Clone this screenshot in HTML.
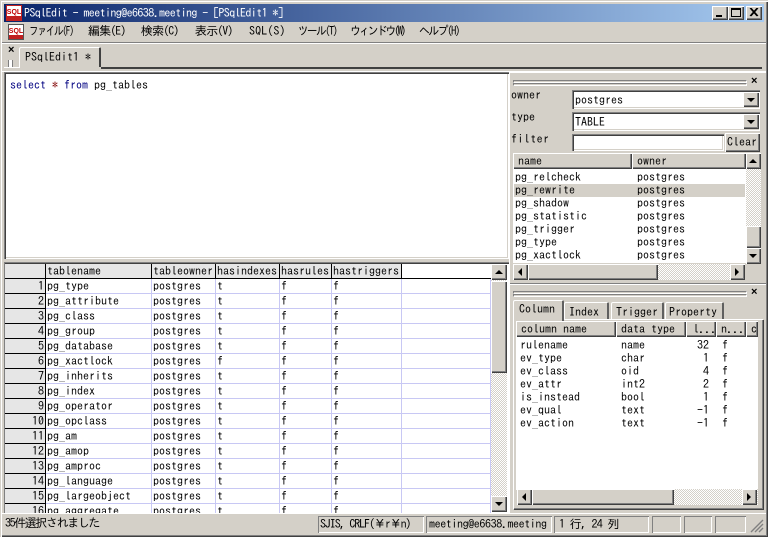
<!DOCTYPE html>
<html><head><meta charset="utf-8"><style>
html,body{margin:0;padding:0;background:#d4d0c8}
#w{position:relative;width:768px;height:537px;overflow:hidden;background:#d4d0c8;font:12px/13px "IPAGothic","Noto Sans CJK JP",monospace;color:#000}
#w div{position:absolute;box-sizing:border-box;white-space:pre}
.r{background:#d4d0c8;box-shadow:inset 1px 1px 0 #fff,inset -1px -1px 0 #404040,inset -2px -2px 0 #808080}
.s{background:#fff;box-shadow:inset 1px 1px 0 #808080,inset 2px 2px 0 #404040,inset -1px -1px 0 #fff,inset -2px -2px 0 #d4d0c8}
.d{background:conic-gradient(#fff 25%,#d4d0c8 0 50%,#fff 0 75%,#d4d0c8 0) 0 0/2px 2px}
.st{box-shadow:inset 1px 1px 0 #808080,inset -1px -1px 0 #fff;padding:2px 0 0 3px}
.g{height:3px;border:1px solid #808080;border-right-color:#fff;border-bottom-color:#fff}
.au,.ad,.al,.ar{width:0;height:0;border:solid transparent}
.au{border-width:0 4px 4px;border-bottom-color:#000}
.ad{border-width:4px 4px 0;border-top-color:#000}
.al{border-width:4px 4px 4px 0;border-right-color:#000}
.ar{border-width:4px 0 4px 4px;border-left-color:#000}
.m{letter-spacing:-.4px;top:25px;transform-origin:0 0}
.tb{background:#d4d0c8;border-top:1px solid #fff;border-left:1px solid #fff;border-right:2px solid #404040;padding:3px 0 0 5px;border-radius:2px 2px 0 0}
table{border-collapse:separate;border-spacing:0;table-layout:fixed;position:absolute;left:5px;top:264px;width:486px}
td{height:15px;box-sizing:border-box;padding:0 0 0 1px;border-right:1px solid #c8c8f4;border-bottom:1px solid #c8c8f4;line-height:14px;white-space:pre;overflow:hidden}
td:first-child{background:#e6e6e6;text-align:right;padding:0 1px 0 0;border-right:1px solid #000;border-bottom:1px solid #000}
tr:first-child td{background:#e6e6e6;border-bottom:1px solid #000;border-right:1px solid #000;padding-left:1px}
tr:first-child td:last-child{background:#fff;border-right:0}
</style></head><body><div id="w">

<div style="left:0;top:0;width:768px;height:537px;box-shadow:inset 1px 1px 0 #d4d0c8,inset 2px 2px 0 #fff,inset -1px -1px 0 #404040,inset -2px -2px 0 #808080"></div>

<div style="left:4px;top:4px;width:760px;height:18px;background:linear-gradient(90deg,#0a246a,#a6caf0);color:#fff;padding:3px 0 0 20px;letter-spacing:-.6px">PSqlEdit - meeting@e6638.meeting - [PSqlEdit1 *]</div>
<svg style="position:absolute;left:6px;top:5px" width="16" height="16"><rect x=".5" y=".5" width="15" height="15" fill="#fff" stroke="#c02020"/><rect x="1" y="11" width="14" height="4" fill="#c02020"/><text x="8" y="9" font-size="7" font-weight="bold" text-anchor="middle" fill="#c00000" font-family="Liberation Sans">SQL</text></svg>
<div class="r" style="left:712px;top:6px;width:16px;height:14px"></div>
<div style="left:716px;top:15px;width:6px;height:2px;background:#000"></div>
<div class="r" style="left:728px;top:6px;width:16px;height:14px"></div>
<div style="left:731px;top:8px;width:10px;height:9px;border:1px solid #000;border-top-width:2px"></div>
<div class="r" style="left:746px;top:6px;width:16px;height:14px"></div>
<svg style="position:absolute;left:749px;top:8px" width="10" height="9"><path d="M1 0L8 8M2 0L9 8M8 0L1 8M9 0L2 8" stroke="#000" stroke-width="1" fill="none"/></svg>

<svg style="position:absolute;left:8px;top:24px" width="16" height="16"><rect x=".5" y=".5" width="15" height="15" fill="#fff" stroke="#555"/><rect x="1" y="11" width="14" height="4" fill="#c02020"/><text x="8" y="9" font-size="7" font-weight="bold" text-anchor="middle" fill="#c00000" font-family="Liberation Sans">SQL</text></svg>
<div class="m" style="left:29px;letter-spacing:-1.6px;transform:scaleX(.8)">ファイル(F)</div>
<div class="m" style="left:88px;letter-spacing:-.9px">編集(E)</div>
<div class="m" style="left:141px;letter-spacing:-.9px">検索(C)</div>
<div class="m" style="left:195px;letter-spacing:-.9px">表示(V)</div>
<div class="m" style="left:249px;letter-spacing:.1px">SQL(S)</div>
<div class="m" style="left:298px;letter-spacing:-1.6px;transform:scaleX(.87)">ツール(T)</div>
<div class="m" style="left:350px;letter-spacing:-2.4px;transform:scaleX(.92)">ウィンドウ(W)</div>
<div class="m" style="left:419px;letter-spacing:-1.6px;transform:scaleX(.9)">ヘルプ(H)</div>

<div style="left:2px;top:42px;width:764px;height:2px;background:linear-gradient(#808080 50%,#fff 50%)"></div>
<div style="left:8px;top:44px;font:bold 11px/12px 'Liberation Sans',sans-serif">×</div>
<div style="left:8px;top:60px;width:5px;height:7px;border-left:1px solid #808080;border-right:1px solid #808080;background:#fff"></div>
<div class="tb" style="left:19px;top:47px;width:82px;height:20px">PSqlEdit1 *</div>
<div style="left:101px;top:67px;width:660px;height:2px;background:#404040"></div>
<div style="left:4px;top:67px;width:16px;height:1px;background:#fff"></div>
<div style="left:761px;top:67px;width:1px;height:2px;background:#404040"></div>
<div style="left:2px;top:71px;width:764px;height:1px;background:#fff"></div>

<div class="s" style="left:4px;top:72px;width:505px;height:187px"></div>
<div style="left:10px;top:79px;color:#000080">select <span style="color:#800000">*</span> from <span style="color:#000">pg_tables</span></div>

<div class="s" style="left:4px;top:262px;width:505px;height:252px;box-shadow:inset 1px 1px 0 #808080,inset 2px 2px 0 #404040"></div>
<div style="left:5px;top:264px;width:486px;height:250px;overflow:hidden;background:#fff"></div>
<div style="left:0;top:0;width:768px;height:514px;overflow:hidden;pointer-events:none">
<table>
<colgroup><col style="width:41px"><col style="width:106px"><col style="width:64px"><col style="width:64px"><col style="width:52px"><col style="width:70px"><col style="width:89px"></colgroup>
<tr><td></td><td>tablename</td><td>tableowner</td><td>hasindexes</td><td>hasrules</td><td>hastriggers</td><td></td></tr>
<tr><td>1</td><td>pg_type</td><td>postgres</td><td>t</td><td>f</td><td>f</td><td></td></tr>
<tr><td>2</td><td>pg_attribute</td><td>postgres</td><td>t</td><td>f</td><td>f</td><td></td></tr>
<tr><td>3</td><td>pg_class</td><td>postgres</td><td>t</td><td>f</td><td>f</td><td></td></tr>
<tr><td>4</td><td>pg_group</td><td>postgres</td><td>t</td><td>f</td><td>f</td><td></td></tr>
<tr><td>5</td><td>pg_database</td><td>postgres</td><td>t</td><td>f</td><td>f</td><td></td></tr>
<tr><td>6</td><td>pg_xactlock</td><td>postgres</td><td>f</td><td>f</td><td>f</td><td></td></tr>
<tr><td>7</td><td>pg_inherits</td><td>postgres</td><td>t</td><td>f</td><td>f</td><td></td></tr>
<tr><td>8</td><td>pg_index</td><td>postgres</td><td>t</td><td>f</td><td>f</td><td></td></tr>
<tr><td>9</td><td>pg_operator</td><td>postgres</td><td>t</td><td>f</td><td>f</td><td></td></tr>
<tr><td>10</td><td>pg_opclass</td><td>postgres</td><td>t</td><td>f</td><td>f</td><td></td></tr>
<tr><td>11</td><td>pg_am</td><td>postgres</td><td>t</td><td>f</td><td>f</td><td></td></tr>
<tr><td>12</td><td>pg_amop</td><td>postgres</td><td>t</td><td>f</td><td>f</td><td></td></tr>
<tr><td>13</td><td>pg_amproc</td><td>postgres</td><td>t</td><td>f</td><td>f</td><td></td></tr>
<tr><td>14</td><td>pg_language</td><td>postgres</td><td>t</td><td>f</td><td>f</td><td></td></tr>
<tr><td>15</td><td>pg_largeobject</td><td>postgres</td><td>t</td><td>f</td><td>f</td><td></td></tr>
<tr><td>16</td><td>pg_aggregate</td><td>postgres</td><td>t</td><td>f</td><td>f</td><td></td></tr>
</table>
</div>
<div class="d" style="left:491px;top:264px;width:16px;height:248px"></div>
<div class="r" style="left:491px;top:264px;width:16px;height:16px"></div><div class="au" style="left:495px;top:270px"></div>
<div class="r" style="left:491px;top:281px;width:16px;height:92px"></div>
<div class="r" style="left:491px;top:496px;width:16px;height:16px"></div><div class="ad" style="left:495px;top:502px"></div>

<div style="left:510px;top:72px;width:256px;height:1px;background:#fff"></div>
<div style="left:509px;top:72px;width:1px;height:441px;background:#fff"></div>
<div class="g" style="left:513px;top:80px;width:234px"></div>
<div class="g" style="left:513px;top:83px;width:234px"></div>
<div style="left:751px;top:75px;font:bold 11px/12px 'Liberation Sans',sans-serif">×</div>
<div style="left:511px;top:89px">owner</div>
<div style="left:511px;top:111px">type</div>
<div style="left:511px;top:133px;letter-spacing:.4px">filter</div>
<div class="s" style="left:572px;top:90px;width:188px;height:19px;padding:4px 0 0 3px">postgres</div>
<div class="r" style="left:743px;top:92px;width:16px;height:15px"></div><div class="ad" style="left:747px;top:98px"></div>
<div class="s" style="left:572px;top:112px;width:188px;height:19px;padding:4px 0 0 3px">TABLE</div>
<div class="r" style="left:743px;top:114px;width:16px;height:15px"></div><div class="ad" style="left:747px;top:120px"></div>
<div class="s" style="left:572px;top:134px;width:152px;height:17px"></div>
<div class="r" style="left:725px;top:133px;width:35px;height:19px;padding:3px 0 0 2px">Clear</div>

<div style="left:513px;top:153px;width:247px;height:110px;background:#fff"></div>
<div class="r" style="left:513px;top:153px;width:119px;height:16px;padding:2px 0 0 5px">name</div>
<div class="r" style="left:632px;top:153px;width:114px;height:16px;padding:2px 0 0 5px">owner</div>
<div class="d" style="left:746px;top:153px;width:15px;height:110px"></div>
<div class="r" style="left:746px;top:153px;width:15px;height:16px"></div><div class="au" style="left:749px;top:159px"></div>
<div class="r" style="left:746px;top:226px;width:15px;height:22px"></div>
<div class="r" style="left:746px;top:248px;width:15px;height:16px"></div><div class="ad" style="left:749px;top:254px"></div>
<div style="left:514px;top:184px;width:231px;height:13px;background:#d4d0c8"></div>
<div style="left:515px;top:171px;line-height:13px">pg_relcheck
pg_rewrite
pg_shadow
pg_statistic
pg_trigger
pg_type
pg_xactlock</div>
<div style="left:637px;top:171px;line-height:13px">postgres
postgres
postgres
postgres
postgres
postgres
postgres</div>
<div class="d" style="left:513px;top:264px;width:232px;height:16px"></div>
<div class="r" style="left:513px;top:264px;width:15px;height:16px"></div><div class="al" style="left:518px;top:268px"></div>
<div class="r" style="left:528px;top:264px;width:130px;height:16px"></div>
<div class="r" style="left:730px;top:264px;width:15px;height:16px"></div><div class="ar" style="left:735px;top:268px"></div>

<div style="left:510px;top:283px;width:256px;height:2px;background:linear-gradient(#808080 50%,#fff 50%)"></div>
<div class="g" style="left:513px;top:291px;width:234px"></div>
<div class="g" style="left:513px;top:294px;width:234px"></div>
<div style="left:751px;top:286px;font:bold 11px/12px 'Liberation Sans',sans-serif">×</div>

<div style="left:513px;top:319px;width:250px;height:190px;border:solid #fff;border-width:1px 0 0 1px;box-shadow:inset -1px -1px 0 #808080,1px 1px 0 #404040"></div>
<div style="left:516px;top:337px;width:242px;height:153px;background:#fff"></div>
<div class="tb" style="left:564px;top:302px;width:45px;height:17px;border-right:2px solid #606060;padding-top:3px;padding-left:4px">Index</div>
<div class="tb" style="left:611px;top:302px;width:53px;height:17px;border-right:2px solid #606060;padding-top:3px;padding-left:4px">Trigger</div>
<div class="tb" style="left:665px;top:302px;width:59px;height:17px;border-right:2px solid #606060;padding-top:3px;padding-left:3px">Property</div>
<div class="tb" style="left:513px;top:300px;width:51px;height:21px;border-right:2px solid #606060;padding-top:2px">Column</div>
<div class="r" style="left:516px;top:321px;width:100px;height:16px;padding:2px 0 0 5px">column name</div>
<div class="r" style="left:616px;top:321px;width:70px;height:16px;padding:2px 0 0 5px">data type</div>
<div class="r" style="left:686px;top:321px;width:30px;height:16px;padding:2px 0 0 7px">l...</div>
<div class="r" style="left:716px;top:321px;width:30px;height:16px;padding:2px 0 0 5px">n...</div>
<div class="r" style="left:746px;top:321px;width:12px;height:16px;padding:2px 0 0 5px;overflow:hidden">c</div>
<div style="left:520px;top:339px;line-height:13px">rulename
ev_type
ev_class
ev_attr
is_instead
ev_qual
ev_action</div>
<div style="left:621px;top:339px;line-height:13px">name
char
oid
int2
bool
text
text</div>
<div style="left:686px;width:23px;top:339px;line-height:13px;text-align:right">32
1
4
2
1
-1
-1</div>
<div style="left:722px;top:339px;line-height:13px">f
f
f
f
f
f
f</div>
<div class="d" style="left:517px;top:489px;width:241px;height:16px"></div>
<div class="r" style="left:517px;top:489px;width:15px;height:16px"></div><div class="al" style="left:522px;top:493px"></div>
<div class="r" style="left:532px;top:489px;width:142px;height:16px"></div>
<div class="r" style="left:742px;top:489px;width:15px;height:16px"></div><div class="ar" style="left:747px;top:493px"></div>

<div style="left:2px;top:513px;width:764px;height:1px;background:#fff"></div>
<div style="left:5px;top:517px;letter-spacing:-1.4px">35件選択されました</div>
<div class="st" style="left:318px;top:516px;width:106px;height:17px;padding-left:2px;letter-spacing:-1.1px">SJIS, CRLF(¥r¥n)</div>
<div class="st" style="left:426px;top:516px;width:126px;height:17px;letter-spacing:-.4px">meeting@e6638.meeting</div>
<div class="st" style="left:554px;top:516px;width:95px;height:17px;padding-left:5px;letter-spacing:-.7px">1 行, 24 列</div>
<div class="st" style="left:652px;top:516px;width:29px;height:17px"></div>
<div class="st" style="left:684px;top:516px;width:28px;height:17px"></div>
<div class="st" style="left:715px;top:516px;width:31px;height:17px"></div>
<svg style="position:absolute;left:750px;top:519px" width="14" height="14"><path d="M13 1L1 13M13 5L5 13M13 9L9 13" stroke="#808080" stroke-width="1.4" fill="none"/></svg>
</div></body></html>
